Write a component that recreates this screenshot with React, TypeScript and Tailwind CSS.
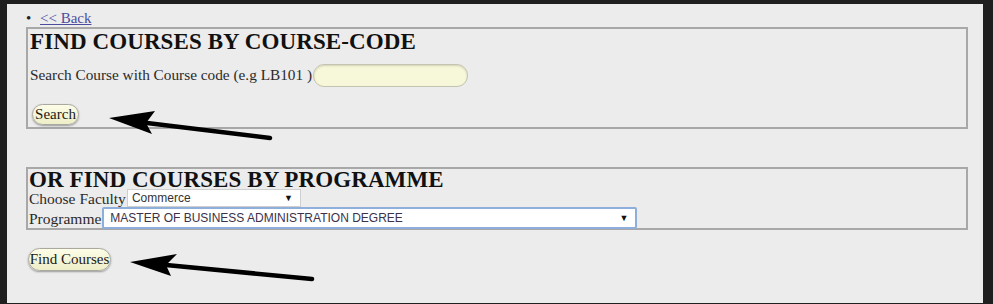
import React from 'react';

const serif = { fontFamily: '"Liberation Serif", "Times New Roman", serif' };
const sans = { fontFamily: '"Liberation Sans", Arial, sans-serif' };

function Pill({ children, className }: { children: React.ReactNode; className?: string }) {
  return (
    <button
      type="button"
      className={`flex items-center justify-center rounded-full border border-[#a9a9a0] bg-gradient-to-b from-[#fdfde8] to-[#eeeec8] text-[15px] text-[#1a1a1a] shadow-[0_1px_2px_rgba(0,0,0,0.35)] ${className ?? ''}`}
      style={serif}
    >
      {children}
    </button>
  );
}

function Arrows() {
  return (
    <svg className="pointer-events-none absolute left-0 top-0" width="993" height="304" viewBox="0 0 993 304">
      {/* arrow pointing at Search */}
      <line x1="147" y1="123" x2="270" y2="138" stroke="#000" strokeWidth="4.5" strokeLinecap="round" />
      <path d="M109 118 L155 111 L146 123 L152 134 Z" fill="#000" />
      {/* arrow pointing at Find Courses */}
      <line x1="166" y1="265" x2="312" y2="279" stroke="#000" strokeWidth="4.5" strokeLinecap="round" />
      <path d="M130 262 L177 254 L166 265 L171 276 Z" fill="#000" />
    </svg>
  );
}

export default function App() {
  return (
    <div className="relative h-[304px] w-[993px] bg-[#1f1f1f] pb-[1px] pl-[7px] pr-[10px] pt-[4px]">
      <div className="h-full bg-[#ececec] pl-[19px] pr-[15px]" style={serif}>
        {/* back link */}
        <div className="flex h-[23px] items-center pt-[5px] text-[15px] leading-[18px]">
          <span className="w-[14px] text-[15px] text-[#222]">•</span>
          <a href="#" className="text-[#4d4d9e] underline">
            &lt;&lt; Back
          </a>
        </div>

        {/* course code search */}
        <div className="h-[102px] border-2 border-[#a8a8a8] pl-[2px]">
          <h2 className="mt-[1px] text-[23px] font-bold leading-[24px] tracking-[0.1px] text-[#111]">
            FIND COURSES BY COURSE-CODE
          </h2>
          <div className="mt-[10px] flex items-center text-[15.3px] text-[#2a2a2a]">
            <span>Search Course with Course code (e.g LB101 )</span>
            <input
              type="text"
              className="ml-[1px] h-[23px] w-[155px] rounded-[11px] border border-[#c4c4b0] bg-[#f7f7d9] px-2 shadow-[inset_0_1px_2px_rgba(0,0,0,0.15)] outline-none"
            />
          </div>
          <Pill className="ml-[2px] mt-[17px] h-[21px] w-[47px]">Search</Pill>
        </div>

        {/* programme search */}
        <div className="mt-[38px] h-[63px] border-2 border-[#a8a8a8] pl-[1px]">
          <h2 className="mt-[1px] h-[19px] text-[23px] font-bold leading-[19px] tracking-[0.1px] text-[#111]">
            OR FIND COURSES BY PROGRAMME
          </h2>
          <div className="flex h-[18px] items-center text-[15.5px] leading-[17px] text-[#2a2a2a]">
            <span>Choose Faculty</span>
            <div
              className="ml-[1px] flex h-[18px] w-[174px] items-center justify-between border border-[#cfcfcf] bg-white pl-[4px] pr-[7px] text-[12px] leading-[14px] text-[#333]"
              style={sans}
            >
              <span>Commerce</span>
              <span className="text-[9px] text-[#111]">▼</span>
            </div>
          </div>
          <div className="flex h-[22px] items-center text-[15.5px] leading-[17px] text-[#2a2a2a]">
            <span>Programme</span>
            <div
              className="ml-[1px] flex h-[22px] w-[535px] items-center justify-between rounded-[2px] border-2 border-[#8eaedb] bg-white pl-[6px] pr-[7px] text-[12px] leading-[14px] text-[#3b3148]"
              style={sans}
            >
              <span>MASTER OF BUSINESS ADMINISTRATION DEGREE</span>
              <span className="text-[9px] text-[#111]">▼</span>
            </div>
          </div>
        </div>

        <Pill className="ml-[2px] mt-[18px] h-[23px] w-[83px]">Find Courses</Pill>
      </div>
      <Arrows />
    </div>
  );
}
